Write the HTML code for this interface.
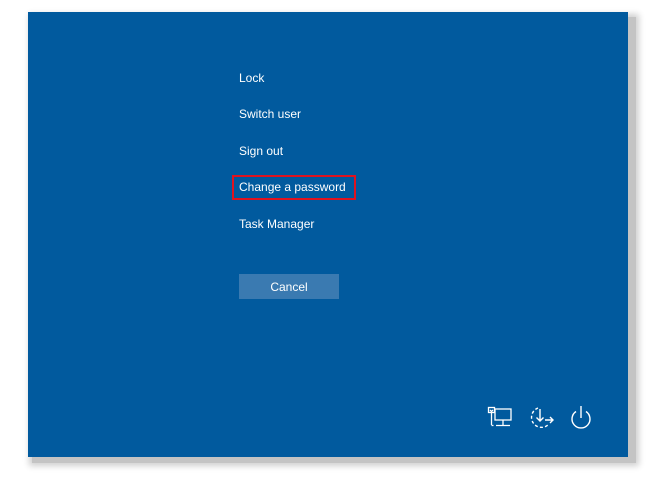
<!DOCTYPE html>
<html><head><meta charset="utf-8"><style>
body{margin:0;width:654px;height:489px;background:#fff;position:relative;overflow:hidden;font-family:"Liberation Sans",sans-serif}
.sh{position:absolute;left:32px;top:17px;width:604px;height:446px;background:#c4c4c4;box-shadow:0 0 6px 3px #d0d0d0}
.p{position:absolute;left:28px;top:12px;width:600px;height:445px;background:#015a9e}
.t{position:absolute;left:239px;color:#fff;font-size:12px;line-height:16px}
.box{position:absolute;left:232px;top:175px;width:120px;height:21px;border:2px solid #e0131f}
.btn{position:absolute;left:239px;top:274px;width:100px;height:25px;background:#3a7ab1;color:#fff;font-size:12px;text-align:center;line-height:26px}
svg{position:absolute}
</style></head><body>
<div class="sh"></div><div class="p"></div>
<div class="t" style="top:70px">Lock</div>
<div class="t" style="top:106px">Switch user</div>
<div class="t" style="top:143px">Sign out</div>
<div class="box"></div>
<div class="t" style="top:179px">Change a password</div>
<div class="t" style="top:216px">Task Manager</div>
<div class="btn">Cancel</div>
<svg style="left:486px;top:405px" width="30" height="28" viewBox="0 0 30 28" fill="none" stroke="#fff" stroke-width="1.3">
<rect x="2.5" y="2.5" width="6" height="5"/><path d="M4 5l1.5 1.5L7 5"/><path d="M5.5 7.5V20"/><rect x="9" y="4" width="16" height="11"/><path d="M17 15v5M10 20.5h14M5.5 20.5h2"/>
</svg>
<svg style="left:527px;top:404px" width="32" height="30" viewBox="0 0 32 30" fill="none" stroke="#fff" stroke-width="1.4">
<path d="M11 4A10 10 0 1 0 22 20" stroke-dasharray="3 2.2"/><path d="M13 5v12M9.5 13.5l3.5 3.5 3.5-3.5M18 16h8M23 13l3 3-3 3"/>
</svg>
<svg style="left:568px;top:404px" width="28" height="30" viewBox="0 0 28 30" fill="none" stroke="#fff" stroke-width="1.4">
<path d="M8 7.5A9 9 0 1 0 18 7.5"/><path d="M13 2v12"/>
</svg>
</body></html>
